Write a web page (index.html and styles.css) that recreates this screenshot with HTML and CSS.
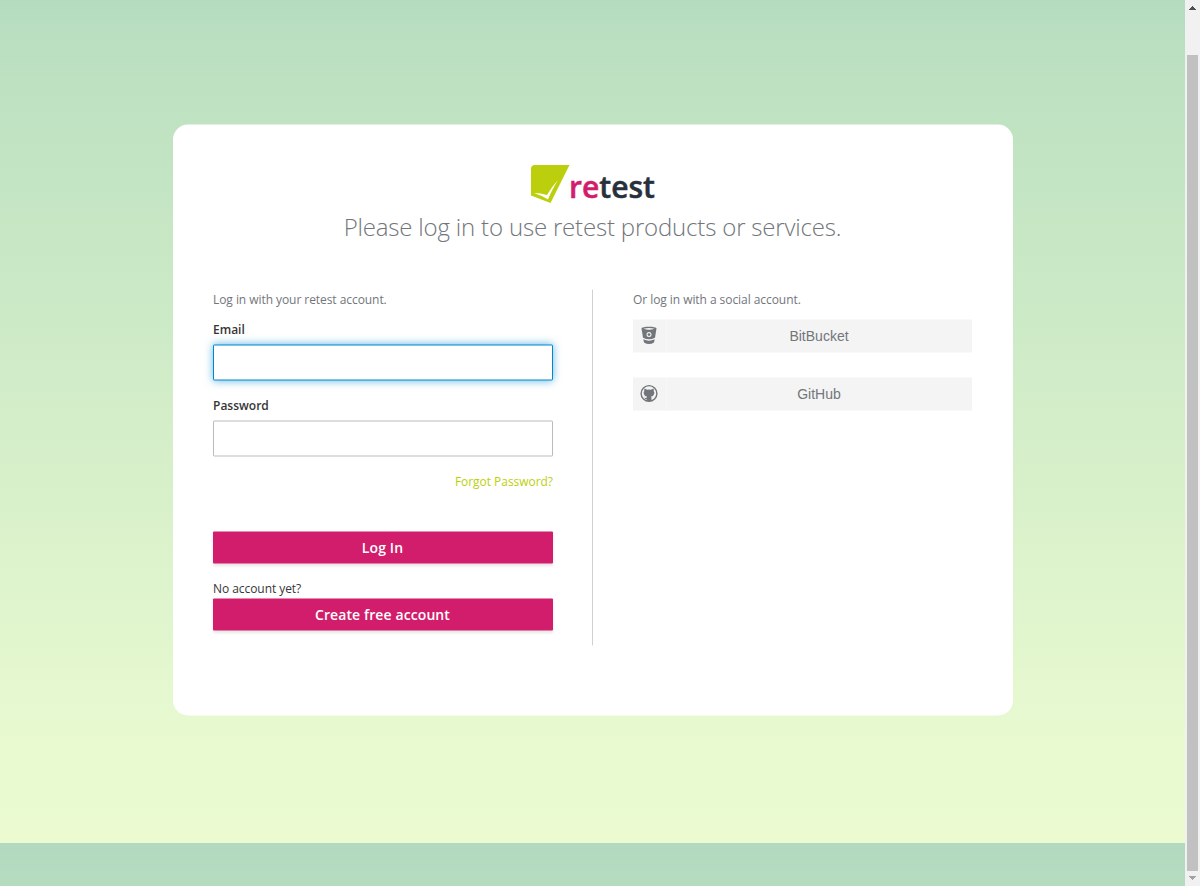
FILE: index.html
```html
<!DOCTYPE html>
<html lang="en">
<head>
<meta charset="utf-8">
<title>Log in to retest</title>
<link rel="stylesheet" href="styles.css">
</head>
<body>
<div class="window">
  <main class="page">
    <section class="card">
      <header class="header">
        <svg class="logo" width="126" height="40" viewBox="0 0 126 40" role="img" aria-label="retest">
          <path fill="#bccf0c" d="M5 .5H39.500L20.500 38.500L1 31V4.500Q1 .5 5 .5Z"/>
          <path fill="#fff" d="M4 28.500Q12 31 18 35Q21.500 26 28 15.500Q21.500 22.500 17 30.500Q11 28.500 4 28.500Z"/>
          <text class="logo-text" x="39" y="33" textLength="86" lengthAdjust="spacingAndGlyphs"><tspan fill="#d11d6b">re</tspan><tspan fill="#28303d">test</tspan></text>
        </svg>
        <h1 class="title">Please log in to use retest products or services.</h1>
      </header>
      <div class="columns">
        <form class="login">
          <p class="hint">Log in with your retest account.</p>
          <label class="label" for="email">Email</label>
          <input class="input input-active" id="email" type="text">
          <label class="label" for="password">Password</label>
          <input class="input" id="password" type="password">
          <a class="forgot" href="#">Forgot Password?</a>
          <button class="button" type="button">Log In</button>
          <p class="signup">No account yet?</p>
          <button class="button button-create" type="button">Create free account</button>
        </form>
        <div class="social">
          <p class="hint">Or log in with a social account.</p>
          <a class="provider" href="#">
            <span class="provider-icon"><svg width="18" height="20" viewBox="0 0 18 20" fill="#72767b"><path fill-rule="evenodd" d="M1.500 3C1.500 .8 16.500 .8 16.500 3L15 12.200Q9 15.500 3 12.200ZM3.500 3.300Q9 5 14.500 3.300Q9 1.900 3.500 3.300ZM9 6.600A2.500 2.500 0 1 0 9 11.600A2.500 2.500 0 1 0 9 6.600Z"/><circle cx="9" cy="9.100" r="1.400"/><path d="M3.300 13.800Q9 16.500 14.700 13.800L14 17Q9 20 4 17Z"/></svg></span>
            <span class="provider-name">BitBucket</span>
          </a>
          <a class="provider" href="#">
            <span class="provider-icon"><svg width="18" height="20" viewBox="0 0 18 20"><circle cx="9" cy="10" r="7.900" fill="none" stroke="#72767b" stroke-width="1.400"/><path fill="#72767b" d="M4.500 5L7.200 6.200Q9 5.800 10.800 6.200L13.500 5Q14 6.200 13.700 7.400Q14.600 8.400 14.300 10Q13.900 12.600 11 13Q11.500 13.500 11.500 14.500V17.500H6.500V15.500C5.200 15.700 4.800 14.800 4.100 14C5.200 14.100 5.400 14.900 6.500 14.500Q6.500 13.500 7 13Q4.100 12.600 3.700 10Q3.400 8.400 4.300 7.400Q4 6.200 4.500 5Z"/></svg></span>
            <span class="provider-name">GitHub</span>
          </a>
        </div>
      </div>
    </section>
  </main>
  <div class="scrollbar" aria-hidden="true">
    <svg class="arrow" width="15" height="15" viewBox="0 0 15 15" shape-rendering="crispEdges"><path fill="#505050" d="M7 6h1v1h1v1h1v1h1v1H4V9h1V8h1V7h1z"/></svg>
    <div class="thumb"></div>
    <svg class="arrow" width="15" height="15" viewBox="0 0 15 15" shape-rendering="crispEdges"><path fill="#a3a3a3" d="M4 5h7v1h-1v1H9v1H8v1H7V8H6V7H5V6H4z"/></svg>
  </div>
</div>
</body>
</html>
```

FILE: styles.css
```css
* { box-sizing: border-box; }
html, body { height: 100%; }
body {
  margin: 0;
  overflow: hidden;
  font: 12px/20px "Open Sans", sans-serif;
  color: #363636;
}
p, h1 { margin: 0; }
.window { display: flex; height: 886px; }
.page {
  flex: 1;
  padding-top: 125px;
  background: linear-gradient(#b2d9bf 0%, #bde1c1 14%, #e9fad0 90%, #ebfad0 100%) 0 -43px / 100% 886px repeat-y;
}
.card {
  width: 840px;
  height: 591px;
  margin: 0 auto;
  padding: 40px 40px 0;
  background: #fff;
  border-radius: 15px;
  transform: translateY(-0.5px);
}
.header { text-align: center; }
.logo { display: block; margin: 0 auto; overflow: visible; }
.logo-text { font: 600 31px "Open Sans", sans-serif; stroke-width: 0.5px; }
.logo-text tspan:first-child { stroke: #d11d6b; }
.logo-text tspan:last-child { stroke: #28303d; }
.title {
  margin-top: 5px;
  font-size: 24px;
  line-height: 34px;
  font-weight: 300;
  letter-spacing: -0.18px;
  color: #72767b;
}
.columns { display: flex; margin-top: 46px; }
.login {
  width: 380px;
  height: 356px;
  padding-right: 40px;
  border-right: 1px solid #d1d1d1;
  display: flex;
  flex-direction: column;
}
.login .input, .login .button { width: 340px; }
.hint { color: #72767b; letter-spacing: -0.06px; padding-left: 0.5px; }
.label { font-weight: 600; margin-top: 10px; padding-left: 0.5px; }
.input {
  height: 36px;
  margin-top: 5px;
  padding: 2px 8px;
  border: 1px solid #bbb;
  border-radius: 1px;
  background: #fff;
  font: inherit;
  outline: 0;
}
.input + .label { margin-top: 15px; }
.input-active { border-color: #0088ce; box-shadow: 0 0 8px rgba(0, 136, 206, .6); }
.forgot {
  margin-top: 15px;
  align-self: flex-end;
  color: #bccf0c;
  text-decoration: none;
  letter-spacing: -0.04px;
  margin-right: -1.5px;
}
.button {
  height: 32px;
  margin-top: 40px;
  padding: 0;
  border: 0;
  border-radius: 1px;
  background: #d11d6b;
  color: #fff;
  font: 600 14px/32px "Open Sans", sans-serif;
  letter-spacing: 0.1px;
  box-shadow: 0 2px 3px rgba(3, 3, 3, .1);
}
.signup { margin-top: 15px; padding-left: 0.5px; letter-spacing: -0.06px; }
.button-create { margin-top: 0; }
.social { width: 379px; padding-left: 40px; }
.provider {
  display: flex;
  height: 33px;
  margin-top: 10px;
  background: #f4f4f4;
  color: #72767b;
  font: 14px/33px "Liberation Sans", Arial, sans-serif;
  text-decoration: none;
}
.provider + .provider { margin-top: 25px; }
.provider-icon {
  width: 34px;
  margin: 1px 0;
  padding-bottom: 1px;
  display: flex;
  align-items: center;
  justify-content: center;
  border-right: 1px solid #f8f8f8;
}
.provider-name { flex: 1; text-align: center; }
.scrollbar {
  display: flex;
  flex-direction: column;
  width: 15px;
  background: #f1f1f1;
}
.arrow { display: block; flex: none; }
.thumb { flex: 1; margin: 40px 2px 0; background: #c1c1c1; }
```
